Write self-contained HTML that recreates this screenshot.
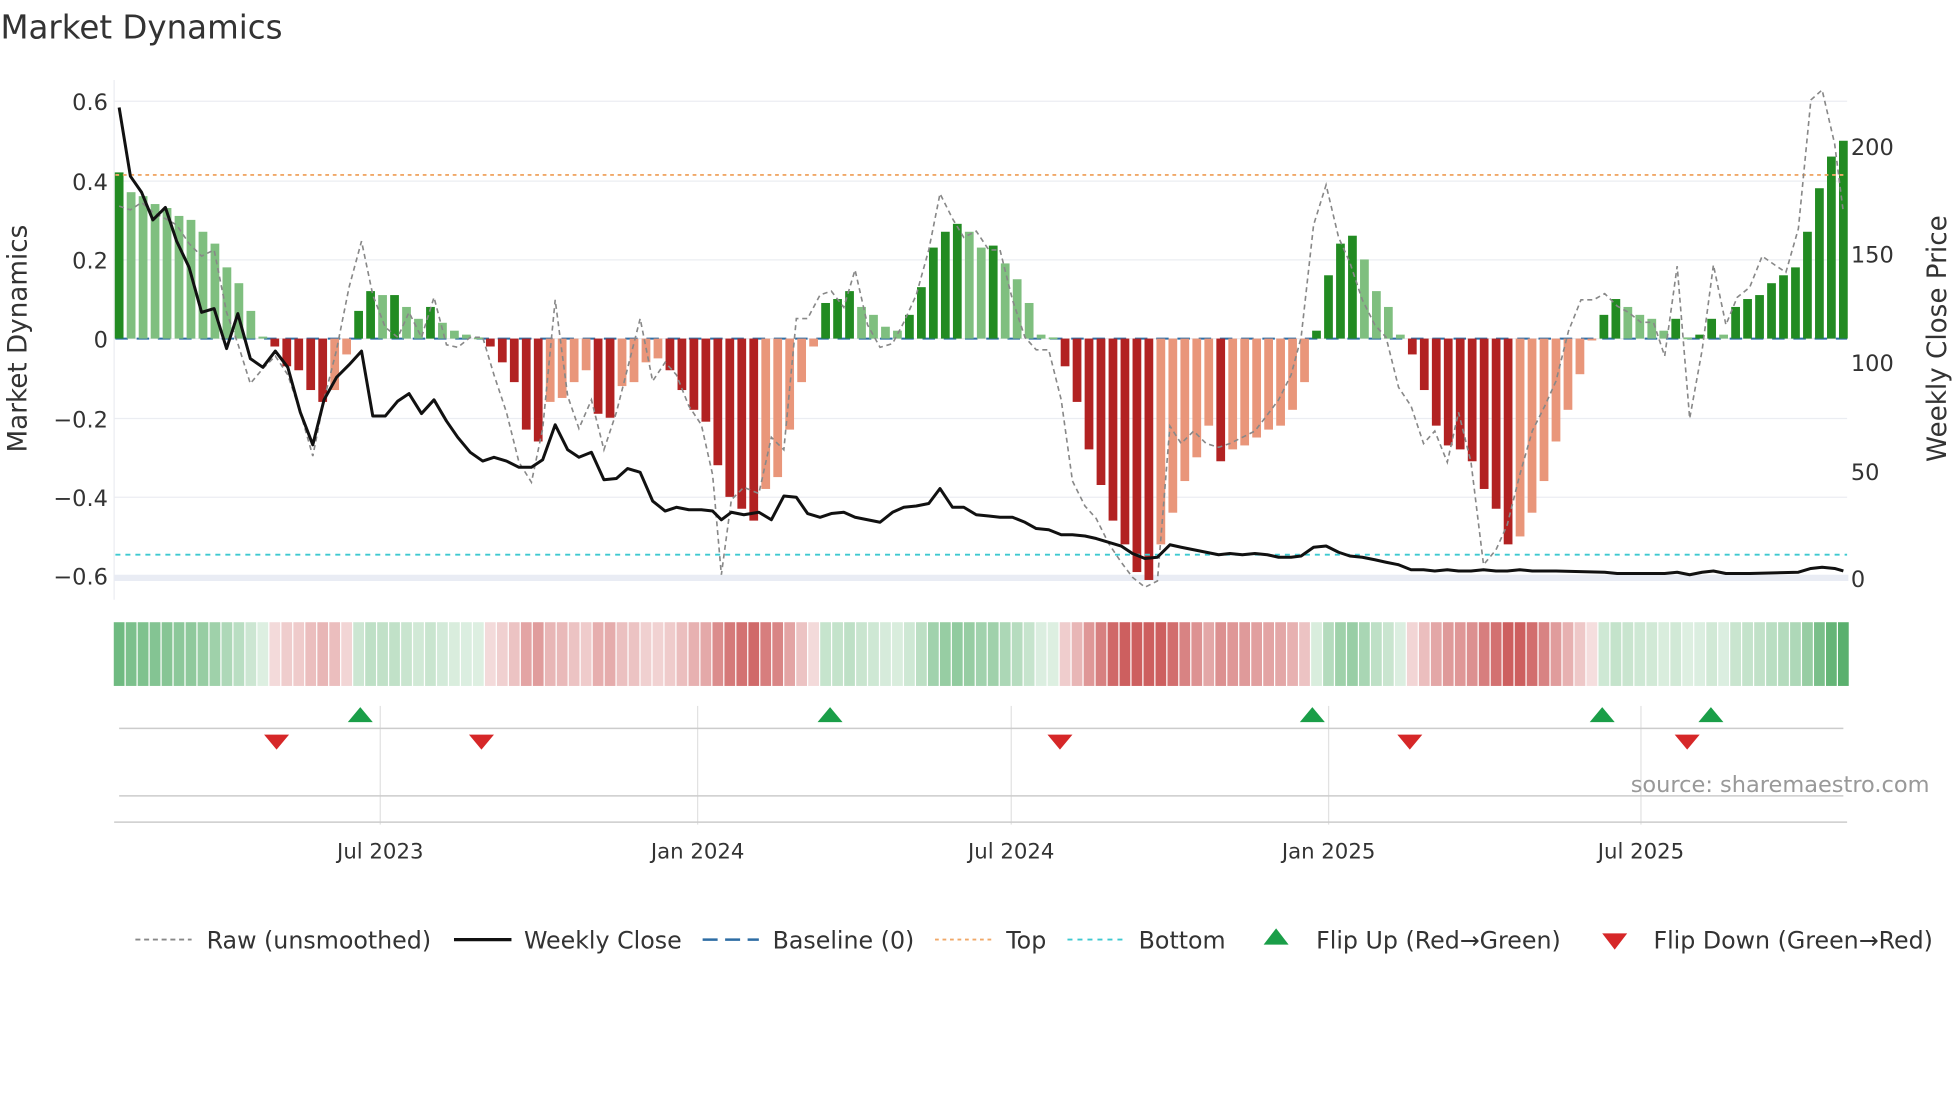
<!DOCTYPE html>
<html><head><meta charset="utf-8"><style>
html,body{margin:0;padding:0;background:#fff;}
svg{display:block;font-family:"DejaVu Sans","Liberation Sans",sans-serif;}
</style></head><body>
<svg id="s" width="1960" height="1102" viewBox="0 0 1568 882" xmlns="http://www.w3.org/2000/svg">
<rect width="1568" height="882" fill="#fff"/>
<text x="0" y="31" font-size="26" fill="#333">Market Dynamics</text>
<g id="grid" stroke="#ebedf2" stroke-width="1"></g>
<line x1="91" y1="64" x2="91" y2="480" stroke="#ebedf2"/>
<rect x="91" y="460" width="1388" height="5" fill="#e9ecf4"/>
<line x1="92" y1="271" x2="1478" y2="271" stroke="#2e6da4" stroke-width="1.6" stroke-dasharray="10,7"/>
<g id="bars"></g>
<line x1="92" y1="140" x2="1478" y2="140" stroke="#f0a868" stroke-width="1.5" stroke-dasharray="3,3"/>
<line x1="92" y1="444" x2="1478" y2="444" stroke="#3ec9d0" stroke-width="1.5" stroke-dasharray="4,4"/>
<polyline id="raw" fill="none" stroke="#888" stroke-width="1.3" stroke-dasharray="4,3"/>
<polyline id="close" fill="none" stroke="#111" stroke-width="2.4" stroke-linejoin="round"/>
<g font-size="18" fill="#333" text-anchor="end">
<text x="86" y="88">0.6</text><text x="86" y="152">0.4</text><text x="86" y="215">0.2</text><text x="86" y="278">0</text>
<text x="86" y="342">−0.2</text><text x="86" y="405">−0.4</text><text x="86" y="468">−0.6</text>
</g>
<g font-size="18" fill="#333">
<text x="1481" y="124">200</text><text x="1481" y="210">150</text><text x="1481" y="297">100</text><text x="1481" y="384">50</text><text x="1481" y="470">0</text>
</g>
<text transform="translate(21,271) rotate(-90)" font-size="21" fill="#333" text-anchor="middle">Market Dynamics</text>
<text transform="translate(1557,271) rotate(-90)" font-size="21" fill="#333" text-anchor="middle">Weekly Close Price</text>
<g id="heat"></g>
<g stroke="#e2e2e2" stroke-width="1">
<line x1="304" y1="565" x2="304" y2="660"/><line x1="558" y1="565" x2="558" y2="660"/><line x1="809" y1="565" x2="809" y2="660"/><line x1="1063" y1="565" x2="1063" y2="660"/><line x1="1313" y1="565" x2="1313" y2="660"/>
</g>
<line x1="95" y1="583" x2="1475" y2="583" stroke="#ccc" stroke-width="1.2"/>
<line x1="95" y1="637" x2="1475" y2="637" stroke="#ccc" stroke-width="1.2"/>
<line x1="91" y1="658" x2="1478" y2="658" stroke="#ccc" stroke-width="1.2"/>
<g id="mk"></g>
<text x="1544" y="634" font-size="18" fill="#999" text-anchor="end">source: sharemaestro.com</text>
<g font-size="17" fill="#333" text-anchor="middle">
<text x="304" y="687">Jul 2023</text><text x="558" y="687">Jan 2024</text><text x="809" y="687">Jul 2024</text><text x="1063" y="687">Jan 2025</text><text x="1313" y="687">Jul 2025</text>
</g>
<g font-size="19" fill="#333">
<line x1="108" y1="752" x2="153" y2="752" stroke="#888" stroke-width="1.5" stroke-dasharray="4,3"/><text x="165" y="759">Raw (unsmoothed)</text>
<line x1="363" y1="752" x2="409" y2="752" stroke="#111" stroke-width="2.6"/><text x="419" y="759">Weekly Close</text>
<line x1="562" y1="752" x2="607" y2="752" stroke="#2e6da4" stroke-width="2" stroke-dasharray="12,6"/><text x="618" y="759">Baseline (0)</text>
<line x1="748" y1="752" x2="793" y2="752" stroke="#f0a868" stroke-width="1.5" stroke-dasharray="3,3"/><text x="805" y="759">Top</text>
<line x1="854" y1="752" x2="899" y2="752" stroke="#3ec9d0" stroke-width="1.5" stroke-dasharray="4,4"/><text x="911" y="759">Bottom</text>
<polygon points="1021,743 1031,756 1011,756" fill="#1a9e48"/><text x="1053" y="759">Flip Up (Red→Green)</text>
<polygon points="1282,747 1302,747 1292,760" fill="#d62728"/><text x="1323" y="759">Flip Down (Green→Red)</text>
</g>
</svg>
<script>
(function(){
var NS="http://www.w3.org/2000/svg";
function el(p,t,a){var e=document.createElementNS(NS,t);for(var k in a)e.setAttribute(k,a[k]);p.appendChild(e);return e;}
var g=document.getElementById('grid');
[81,145,208,271,335,398,461].forEach(function(y){el(g,'line',{x1:91,y1:y,x2:1478,y2:y});});
var v=[0.42,0.37,0.36,0.34,0.33,0.31,0.30,0.27,0.24,0.18,0.14,0.07,0.005,-0.02,-0.07,-0.08,-0.13,-0.16,-0.13,-0.04,0.07,0.12,0.11,0.11,0.08,0.05,0.08,0.04,0.02,0.01,0.003,-0.02,-0.06,-0.11,-0.23,-0.26,-0.16,-0.15,-0.11,-0.08,-0.19,-0.20,-0.12,-0.11,-0.06,-0.05,-0.08,-0.13,-0.18,-0.21,-0.32,-0.40,-0.43,-0.46,-0.38,-0.35,-0.23,-0.11,-0.02,0.09,0.10,0.12,0.08,0.06,0.03,0.02,0.06,0.13,0.23,0.27,0.29,0.27,0.23,0.235,0.19,0.15,0.09,0.01,0.003,-0.07,-0.16,-0.28,-0.37,-0.46,-0.52,-0.59,-0.61,-0.52,-0.44,-0.36,-0.30,-0.22,-0.31,-0.28,-0.27,-0.25,-0.23,-0.22,-0.18,-0.11,0.02,0.16,0.24,0.26,0.20,0.12,0.08,0.01,-0.04,-0.13,-0.22,-0.27,-0.28,-0.31,-0.38,-0.43,-0.52,-0.50,-0.44,-0.36,-0.26,-0.18,-0.09,-0.003,0.06,0.10,0.08,0.06,0.05,0.02,0.05,0.003,0.01,0.05,0.01,0.08,0.10,0.11,0.14,0.16,0.18,0.27,0.38,0.46,0.50];
var n=v.length, x0=95, x1=1475, dx=(x1-x0)/(n-1), Z=271, S=316.7;
var b=document.getElementById('bars'), hm=document.getElementById('heat');
for(var i=0;i<n;i++){
 var x=x0+i*dx, val=v[i], prev=i?v[i-1]:0;
 var inc=Math.abs(val)>=Math.abs(prev)||(val*prev<0);
 var col=val>=0?(inc?'#228b22':'#7fbf7f'):(inc?'#b22222':'#e9967a');
 var y=Z-val*S, ty=Math.min(y,Z), hh=Math.max(Math.abs(y-Z),1.5);
 el(b,'rect',{x:x-3.5,y:ty,width:7,height:hh,fill:col});
 var a=Math.min(1,0.2+Math.abs(val)*1.6);
 var c=val>=0?[90,176,110]:[205,95,95];
 var r=Math.round(255-(255-c[0])*a),gg=Math.round(255-(255-c[1])*a),bb=Math.round(255-(255-c[2])*a);
 el(hm,'rect',{x:x-4.3,y:498,width:8.6,height:51,fill:'rgb('+r+','+gg+','+bb+')'});
}
var close="95,86 104,141 113,154 122,176 132,166 141,193 151,214 161,250 171,247 181,279 190,251 200,287 210,294 220,281 230,294 240,330 250,356 259,320 269,302 279,292 289,281 298,333 308,333 318,321 327,315 337,331 347,320 357,337 366,350 376,362 386,369 395,366 405,369 415,374 425,374 434,368 444,340 454,360 463,366 473,362 483,384 493,383 502,375 512,378 522,401 532,409 541,406 551,408 561,408 570,409 577,416 585,410 595,412 607,410 617,416 627,397 637,398 646,411 656,414 665,411 675,410 684,414 694,416 704,418 714,410 723,406 733,405 743,403 752,391 762,406 771,406 781,412 791,413 800,414 810,414 820,418 829,423 839,424 849,428 858,428 868,429 877,431 887,434 897,437 906,443 916,447 926,446 936,436 945,438 955,440 965,442 975,444 984,443 994,444 1004,443 1014,444 1023,446 1033,446 1041,445 1051,438 1061,437 1071,442 1080,445 1090,446 1100,448 1109,450 1119,452 1129,456 1139,456 1148,457 1158,456 1167,457 1177,457 1187,456 1197,457 1206,457 1216,456 1226,457 1245,457 1284,458 1294,459 1313,459 1332,459 1342,458 1352,460 1362,458 1371,457 1381,459 1400,459 1439,458 1449,455 1458,454 1468,455 1475,457";
document.getElementById('close').setAttribute('points',close);
var raw="95,165 104,168 113,162 122,170 132,175 141,180 151,195 161,205 171,200 181,250 190,275 200,307 210,295 220,285 230,300 240,330 250,365 259,320 269,280 279,230 289,193 298,236 308,262 318,270 327,250 337,270 347,238 357,276 366,278 376,270 386,270 395,300 405,330 415,370 425,386 434,343 444,240 454,317 463,343 473,320 483,360 493,330 512,255 522,305 532,290 541,300 551,325 561,340 570,380 577,460 585,400 595,390 607,395 617,350 627,360 637,255 646,255 656,236 665,233 675,246 684,216 694,260 704,278 714,275 723,258 733,236 743,200 752,155 762,175 771,190 781,185 791,200 800,200 810,240 820,270 829,280 839,280 849,320 858,385 868,405 877,415 887,435 897,450 906,462 916,470 926,465 936,341 945,355 955,345 965,355 975,358 984,355 994,350 1004,345 1014,332 1023,320 1033,300 1041,270 1051,180 1061,148 1071,190 1080,210 1090,240 1100,260 1109,270 1119,310 1129,325 1139,355 1148,345 1158,370 1167,330 1177,370 1187,452 1197,440 1206,420 1216,380 1226,345 1236,325 1245,305 1255,265 1265,240 1275,240 1284,235 1294,245 1303,250 1313,258 1323,258 1332,285 1342,213 1352,335 1362,280 1371,212 1381,260 1390,238 1400,230 1410,205 1420,212 1429,218 1439,183 1449,80 1458,72 1468,115 1475,170";
document.getElementById('raw').setAttribute('points',raw);
var mk=document.getElementById('mk');
[288,664,1050,1282,1369].forEach(function(x){el(mk,'polygon',{points:x+',566 '+(x+10)+',578 '+(x-10)+',578',fill:'#1a9e48'});});
[221,385,848,1128,1350].forEach(function(x){el(mk,'polygon',{points:(x-10)+',588 '+(x+10)+',588 '+x+',600',fill:'#d62728'});});
})();
</script>
</body></html>
